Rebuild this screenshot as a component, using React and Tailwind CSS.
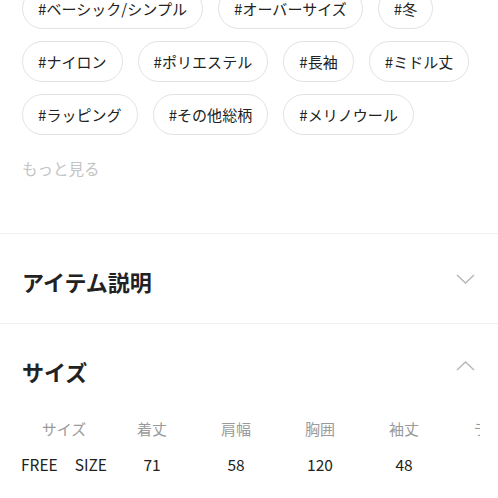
import React from 'react';

const tags = [
  '#ベーシック/シンプル', '#オーバーサイズ', '#冬',
  '#ナイロン', '#ポリエステル', '#長袖', '#ミドル丈',
  '#ラッピング', '#その他総柄', '#メリノウール',
];

const headers = ['サイズ', '着丈', '肩幅', '胸囲', '袖丈', 'ラグラン'];
const values = ['', '71', '58', '120', '48', ''];

function Chevron({ up }) {
  return (
    <svg width="19" height="10" viewBox="0 0 19 10" className="text-[#b5b5b5]">
      <path
        d={up ? 'M1 9 L9.5 1 L18 9' : 'M1 1 L9.5 9 L18 1'}
        fill="none"
        stroke="currentColor"
        strokeWidth="1.3"
      />
    </svg>
  );
}

export default function App() {
  return (
    <div
      className="w-[498px] h-[498px] overflow-hidden bg-white text-[#222]"
      style={{ fontFamily: '"Noto Sans CJK JP", "Noto Sans", sans-serif' }}
    >
      <div className="-mt-3 px-[22px] flex flex-wrap gap-x-[15px] gap-y-3">
        {tags.map((t) => (
          <div
            key={t}
            className="h-[41px] px-[15px] flex items-center rounded-full border border-[#e2e2e2] text-[15px] tracking-[0.05px] leading-none"
          >
            {t}
          </div>
        ))}
      </div>

      <div className="px-[22px] mt-[22px] text-[15.5px] leading-[22px] text-[#c4c4c4]">もっと見る</div>

      <div className="mt-[54px] border-t border-[#efefef]">
        <div className="h-[89px] px-[22px] flex items-center justify-between">
          <div className="text-[22px] font-bold pt-[6px]">アイテム説明</div>
          <div className="pr-[1px]">
            <Chevron />
          </div>
        </div>
      </div>

      <div className="border-t border-[#efefef]">
        <div className="h-[88px] px-[22px] flex items-center justify-between">
          <div className="text-[22px] font-bold pt-[6px]">サイズ</div>
          <div className="pr-[1px] pb-1">
            <Chevron up />
          </div>
        </div>

        <div className="ml-[18px] mt-1 w-[462px] overflow-hidden">
          <div className="grid grid-cols-[92px_84px_84px_84px_84px_114px] w-max">
            {headers.map((h) => (
              <div key={h} className="h-[26px] flex items-center justify-center text-[15px] text-[#9a9a9a] whitespace-nowrap">
                {h}
              </div>
            ))}
            {values.map((v, i) => (
              <div key={i} className="mt-[10px] h-[26px] flex items-center justify-center text-[15.5px] text-[#222] whitespace-nowrap">
                {i === 0 ? (
                  <>
                    <span>FREE</span>
                    <span className="ml-[17px]">SIZE</span>
                  </>
                ) : (
                  v
                )}
              </div>
            ))}
          </div>
        </div>
      </div>
    </div>
  );
}
